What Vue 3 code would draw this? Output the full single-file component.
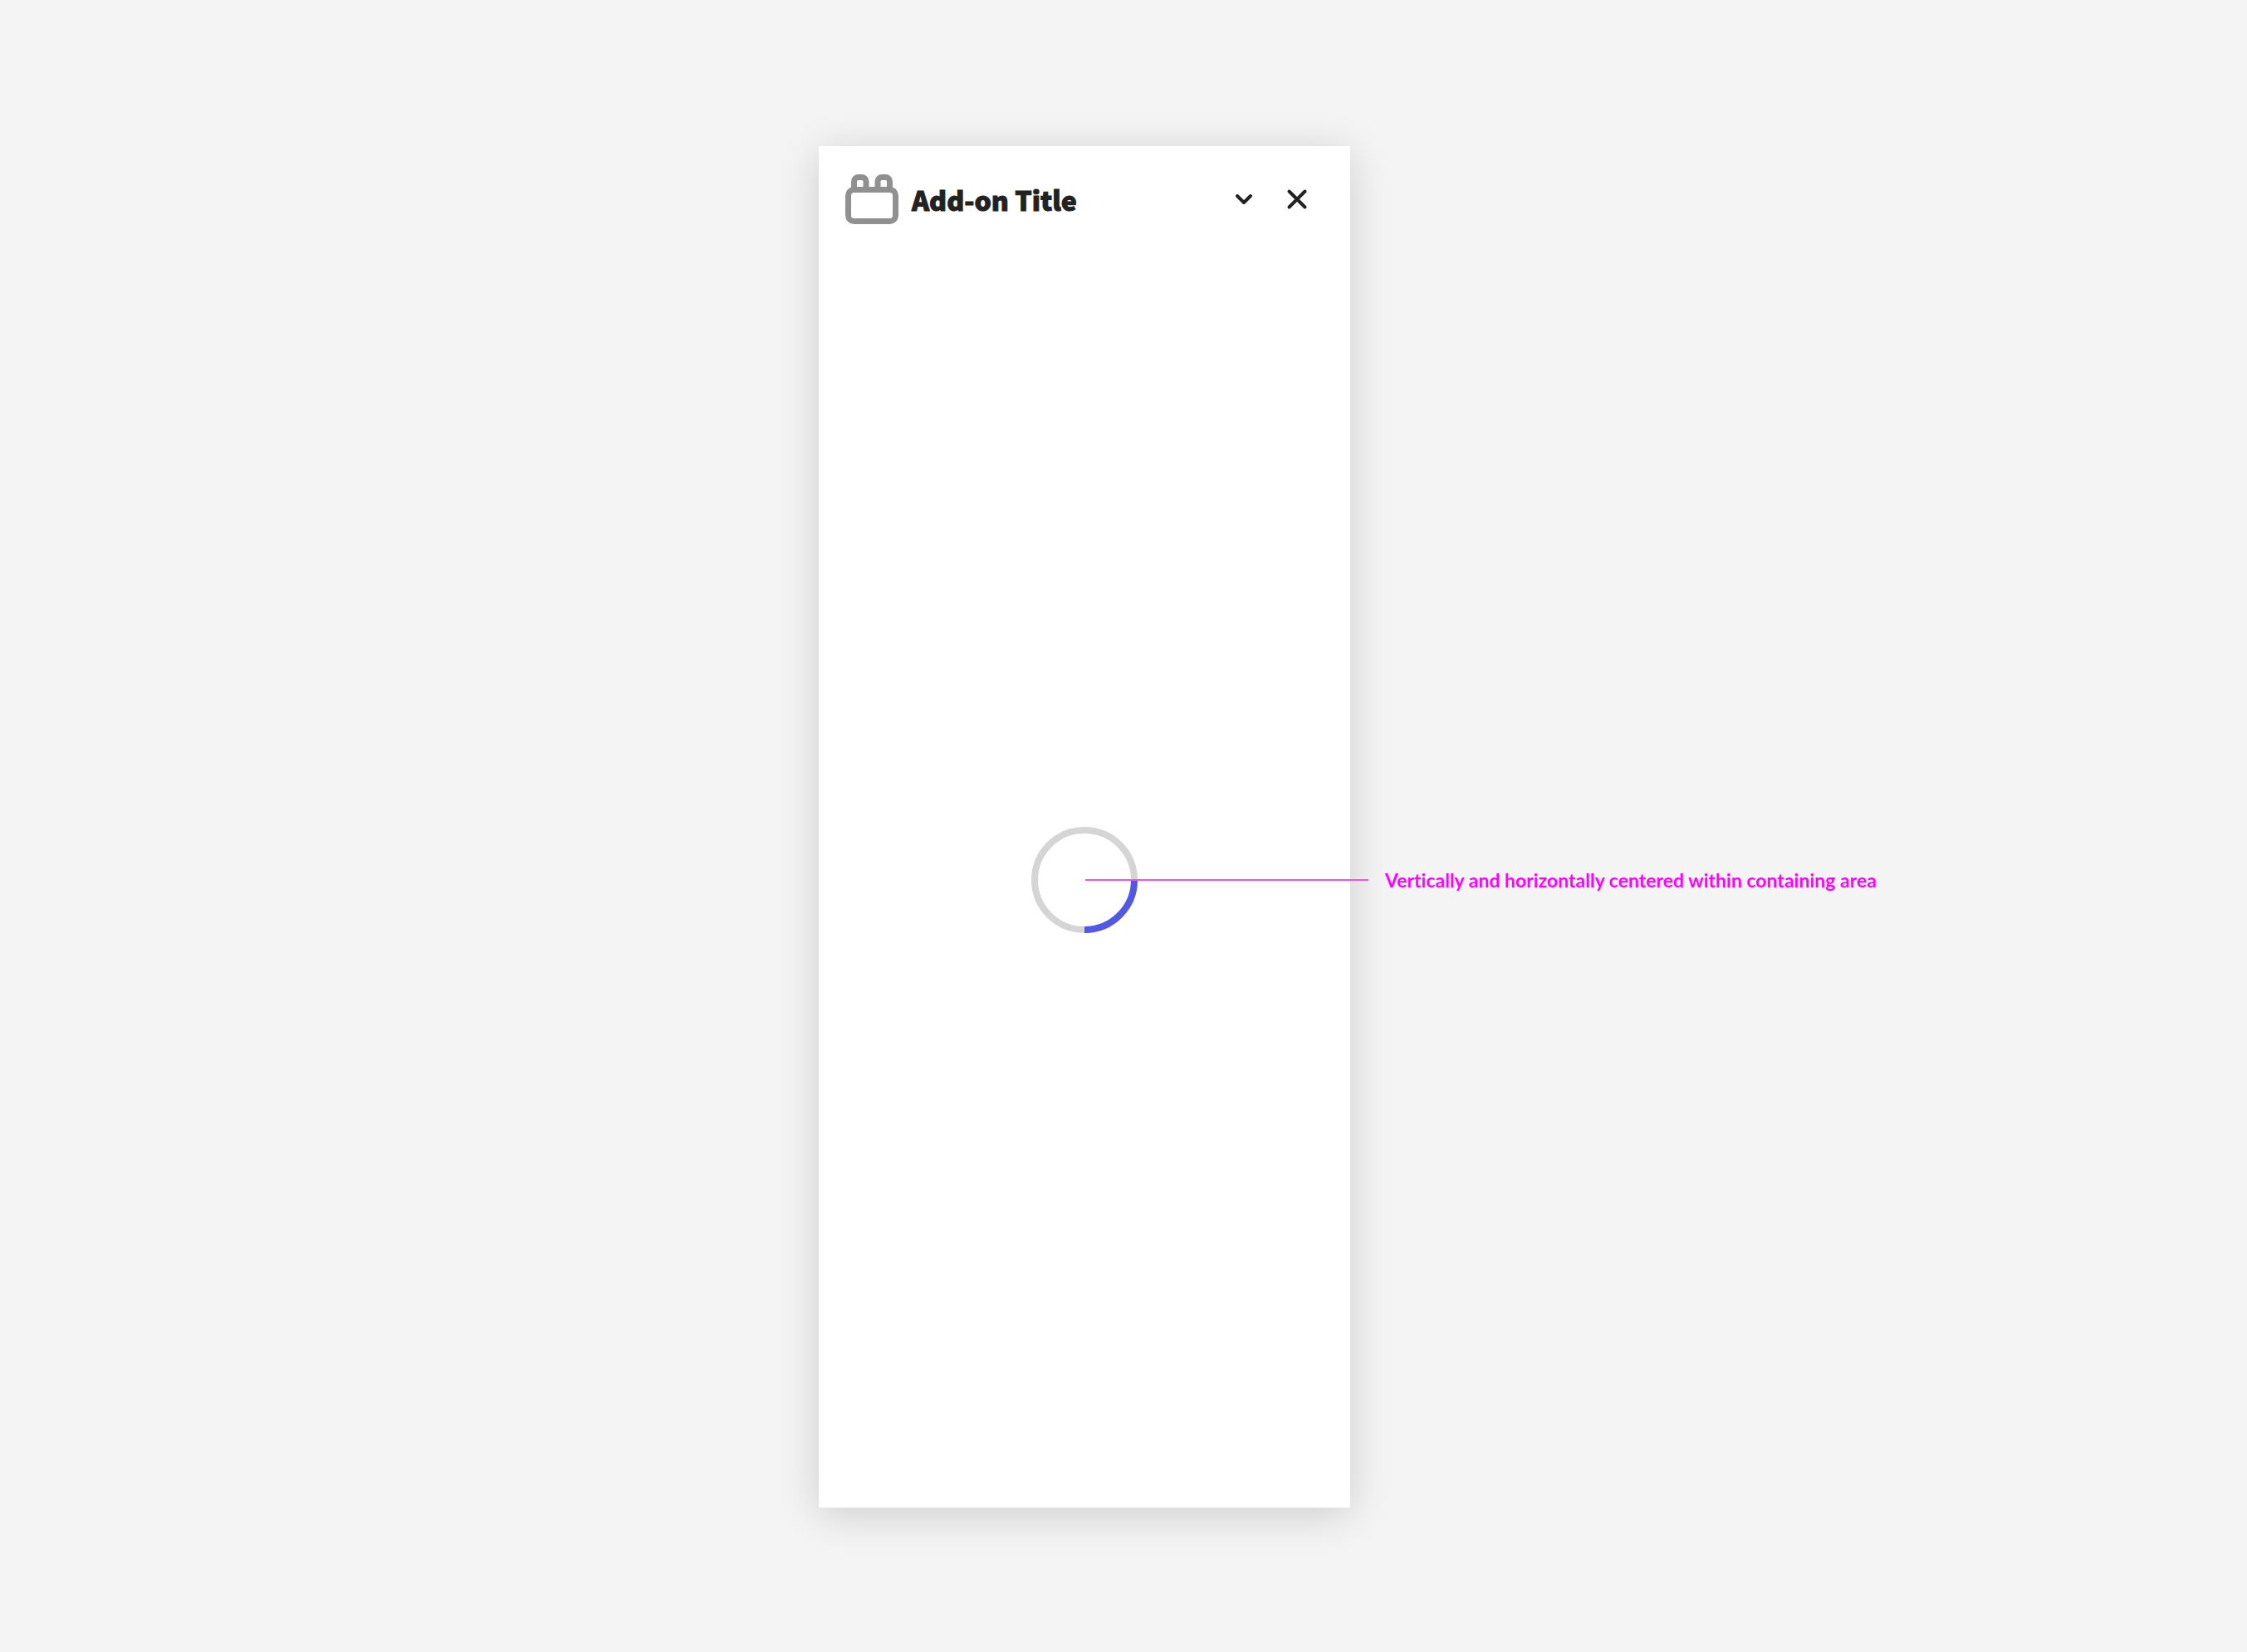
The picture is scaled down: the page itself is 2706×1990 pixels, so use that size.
<script setup>
const title = 'Add-on Title'
const note = 'Vertically and horizontally centered within containing area'
</script>

<template>
  <main class="page">
    <section class="panel" aria-labelledby="panel-title">
      <header class="panel-header">
        <svg class="logo" viewBox="0 0 64 60" aria-hidden="true">
          <g fill="none" stroke="#909090" stroke-width="7">
            <rect x="3.5" y="18.5" width="57" height="38" rx="7" />
            <path d="M10.5 18V8.500a5 5 0 0 1 5-5h4.500a5 5 0 0 1 5 5V18" />
            <path d="M39 18V8.500a5 5 0 0 1 5-5h4.500a5 5 0 0 1 5 5V18" />
          </g>
        </svg>
        <h1 id="panel-title" class="title">{{ title }}</h1>
        <button class="action" type="button" aria-label="Collapse">
          <svg viewBox="0 0 64 64" aria-hidden="true">
            <path d="M24 28l8 8 8-8" />
          </svg>
        </button>
        <button class="action" type="button" aria-label="Close">
          <svg viewBox="0 0 64 64" aria-hidden="true">
            <path d="M22.500 22.500l19 19M41.500 22.500l-19 19" />
          </svg>
        </button>
      </header>
      <div class="panel-body">
        <div class="loader">
          <svg class="spinner" viewBox="0 0 128 128" role="img" aria-label="Loading">
            <circle cx="64" cy="64" r="60" fill="none" stroke="#d5d5d5" stroke-width="8" />
            <path d="M124 64a60 60 0 0 1-60 60" fill="none" stroke="#5258e4" stroke-width="8" />
          </svg>
          <div class="annotation">
            <span class="leader"></span>
            <span class="note">{{ note }}</span>
          </div>
        </div>
      </div>
    </section>
  </main>
</template>

<style>
body {
  margin: 0;
  background: #f4f4f4;
}
</style>

<style scoped>
.page {
  box-sizing: border-box;
  min-height: 100vh;
  display: flex;
  justify-content: center;
  padding: 176px 94px 174px 0;
  background: #f4f4f4;
  font-family: "Noto Sans CJK SC", "Noto Sans", sans-serif;
}

.panel {
  width: 640px;
  display: flex;
  flex-direction: column;
  background: #fff;
  box-shadow: 0 8px 48px rgba(0, 0, 0, 0.16);
}

.panel-header {
  height: 128px;
  display: flex;
  align-items: center;
  padding: 0 32px;
}

.logo {
  width: 64px;
  height: 60px;
  margin-right: 16px;
}

.title {
  flex: 1;
  margin: 0;
  color: #222;
  font-size: 32px;
  font-weight: 900;
  line-height: 48px;
  white-space: nowrap;
  -webkit-text-stroke: 1px #222;
}

.action {
  width: 64px;
  height: 64px;
  padding: 0;
  border: 0;
  background: none;
}

.action svg {
  display: block;
  fill: none;
  stroke: #222;
  stroke-width: 4;
  stroke-linecap: round;
  stroke-linejoin: round;
}

.panel-body {
  flex: 1;
  display: flex;
  align-items: center;
  justify-content: center;
}

.loader {
  position: relative;
  width: 128px;
  height: 128px;
}

.spinner {
  display: block;
}

/* Callout that starts at the spinner's centre and runs past the panel edge */
.annotation {
  position: absolute;
  top: 0;
  bottom: 0;
  left: 50%;
  display: flex;
  align-items: center;
  gap: 20px;
  white-space: nowrap;
}

.leader {
  width: 341px;
  height: 2px;
  margin-left: 1px;
  background: #f050f5;
}

.note {
  color: #f0f;
  font-family: Lato, sans-serif;
  font-size: 23px;
  font-weight: 700;
  font-variant-ligatures: none;
  line-height: 32px;
}
</style>
